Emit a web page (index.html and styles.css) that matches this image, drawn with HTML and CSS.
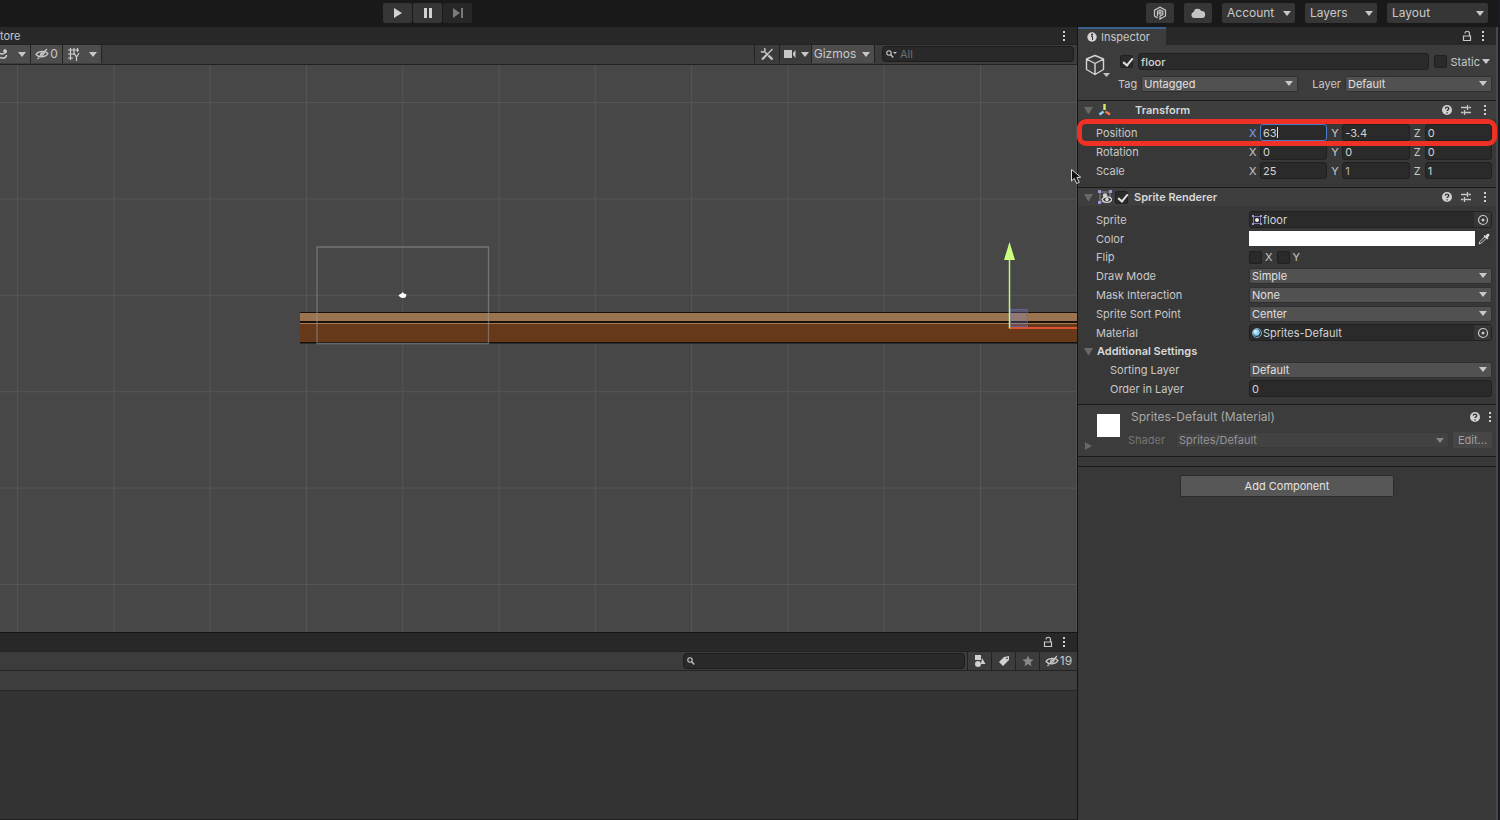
FILE: index.html
```html
<!DOCTYPE html>
<html lang="en">
<head>
<meta charset="utf-8">
<title>Editor</title>
<link rel="stylesheet" href="styles.css">
</head>
<body>
<svg class="sprites" aria-hidden="true">
  <symbol id="help" viewBox="0 0 12 12"><circle cx="6" cy="6" r="5" fill="#d0d0d0"/><path d="M4.300 4.800c0-2.300 3.500-2.200 3.500-.2 0 1.300-1.700 1.200-1.700 2.500M6.100 8.200v1.300" fill="none" stroke="#333" stroke-width="1.300"/></symbol>
  <symbol id="preset" viewBox="0 0 12 12"><path d="M1 3.500h6M8.500 3.500H11M7.500 1v5M1 8.500h2.500M5 8.500h6M4.500 6v5" fill="none" stroke="#c8c8c8" stroke-width="1.300"/></symbol>
  <symbol id="more" viewBox="0 0 4 12"><path d="M1 1h2v2H1zM1 5h2v2H1zM1 9h2v2H1z" fill="#d0d0d0"/></symbol>
  <symbol id="lock" viewBox="0 0 10 12"><path d="M1.500 6h7v4.500h-7zM3 3.500c0-3 4.500-3 4.500 0V6" fill="none" stroke="#c8c8c8" stroke-width="1.200"/></symbol>
  <symbol id="eye" viewBox="0 0 14 12"><path d="M1 6.500C3 3 10 2 13 5.500 11 9.500 4 10 1 6.500zM2.500 11 12 1" fill="none" stroke="#c8c8c8" stroke-width="1.200"/><path d="M5 7.500c-.5-3 2-4 3.500-3.500z" fill="#c8c8c8"/><path d="M6.500 9 10 4.500" stroke="#c8c8c8" stroke-width="1.200"/></symbol>
  <symbol id="glass" viewBox="0 0 12 10"><circle cx="4" cy="4" r="2.200" fill="none" stroke="#c8c8c8" stroke-width="1.100"/><path d="m5.700 5.700 2.600 2.800" stroke="#c8c8c8" stroke-width="1.300"/></symbol>
  <symbol id="target" viewBox="0 0 12 12"><circle cx="6" cy="6" r="4.500" fill="none" stroke="#c8c8c8" stroke-width="1.200"/><circle cx="6" cy="6" r="1.500" fill="#c8c8c8"/></symbol>
</svg>

<header class="topbar">
  <div class="transport">
    <button class="tool" aria-label="Play"><svg width="14" height="12" viewBox="0 0 14 12"><path d="M3 1v10l8-5z" fill="#d2d2d2"/></svg></button>
    <button class="tool" aria-label="Pause"><svg width="14" height="12" viewBox="0 0 14 12"><path d="M3 1h3v10H3zM8 1h3v10H8z" fill="#d2d2d2"/></svg></button>
    <button class="tool dim" aria-label="Step"><svg width="14" height="12" viewBox="0 0 14 12"><path d="M2 1v10l7-5zM10 1h2v10h-2z" fill="#7a7a7a"/></svg></button>
  </div>
  <div class="account">
    <button class="tool" aria-label="Collaborate"><svg width="14" height="14" viewBox="0 0 14 14" fill="none" stroke="#c8c8c8" stroke-width="1.200"><path d="M4.500 12 1.500 10V4.200L7 1.200l5.500 3V10L7 13v-3"/><path d="M4.500 10.500V5.300L7 4l2.800 1.400v3.200L7 10"/><circle cx="7" cy="7" r="1.100"/></svg></button>
    <button class="tool" aria-label="Cloud"><svg width="16" height="12" viewBox="0 0 16 12"><path d="M4 11a3 3 0 0 1-.3-5.900A4 4 0 0 1 11.300 4 3.500 3.500 0 0 1 12 11z" fill="#c4c4c4"/></svg></button>
    <button class="tool menu acct">Account</button>
    <span class="menu"><select class="top-select layers" aria-label="Layers"><option>Layers</option></select></span>
    <span class="menu"><select class="top-select layout" aria-label="Layout"><option>Layout</option></select></span>
  </div>
</header>

<div class="workspace">
  <main class="left">
    <section class="scene">
      <div class="tabs"><span class="cut-tab">tore</span><button class="icon push" aria-label="Scene menu"><svg width="4" height="12"><use href="#more"/></svg></button></div>
      <div class="bar scene-bar">
        <button class="tb lit fx" aria-label="Effects"><svg width="8" height="12" viewBox="0 0 8 12"><path d="M0 5.500c2 1 4 .5 6.500-1.500M0 9.500c4 1.500 6.500 0 6.500-2.500M3 3h4M5 1v4" fill="none" stroke="#d0d0d0" stroke-width="1.500"/></svg></button>
        <button class="tb lit drop" aria-label="Effects options"></button>
        <button class="tb lit hidden-count"><svg width="14" height="12"><use href="#eye"/></svg>0</button>
        <button class="tb lit grid-btn" aria-label="Grid"><svg width="14" height="14" viewBox="0 0 14 14"><path d="M1 3h11M1 7h6M1 11h5M3.500 1v12M7 1v7M10.500 1v4M7 6l2.500 4L12 6M9.500 10v4" fill="none" stroke="#d0d0d0" stroke-width="1.200"/></svg></button>
        <button class="tb lit drop" aria-label="Grid options"></button>
        <button class="tb push tools" aria-label="Tools"><svg width="14" height="14" viewBox="0 0 14 14" fill="none" stroke="#c8c8c8"><path d="m2 12.500 6-6" stroke-width="2.200"/><path d="m8 6.500 4.500-4.500" stroke-width="1.300"/><path d="m5 5 3 3" stroke-width="1.600"/><path d="m8.500 8.500 4 4" stroke-width="2.400"/><path d="M1 4.500c3 1.500 5-.5 3.500-3.500" stroke-width="1.500"/></svg></button>
        <button class="tb camera" aria-label="Camera"><svg width="14" height="10" viewBox="0 0 14 10"><path d="M1 1h8v8H1zM10 4l2.500-3v8L10 6z" fill="#c8c8c8"/></svg><i class="tri"></i></button>
        <button class="tb lit gizmos">Gizmos</button>
        <button class="tb lit drop" aria-label="Gizmos options"></button>
        <label class="search all"><svg width="12" height="10"><use href="#glass"/><path d="M8 3h4l-2 2z" fill="#c8c8c8"/></svg><input type="text" placeholder="All" aria-label="Search scene"></label>
      </div>
      <svg class="view" role="img" aria-label="Scene view">
        <defs>
          <pattern id="grid" x="17" y="37" width="96.300" height="96.400" patternUnits="userSpaceOnUse"><path d="M.5 0v97M0 .5h97" stroke="#555" stroke-width="1"/></pattern>
        </defs>
        <rect width="100%" height="100%" fill="url(#grid)"/>
        <svg x="300" y="247" width="100%" height="32">
          <rect width="100%" height="32" fill="#66391a"/>
          <rect width="100%" height="9" fill="#9a7350"/>
          <rect width="100%" height="1" fill="#17100b"/>
          <rect y="9" width="100%" height="2" fill="#17100b"/>
          <rect y="11" width="100%" height="1" fill="#a87c54"/>
          <rect y="30" width="100%" height="1" fill="#17100b"/>
          <rect y="31" width="100%" height="1" fill="#2c2c2c"/>
        </svg>
        <path d="M317 278.500V182h171.500v96.500z" fill="none" stroke="#a0a0a0" stroke-opacity=".5" stroke-width="1.300"/>
        <path d="M398.500 230.500c1.500-2 3-1 4-3.500l1.500 1.500 2.500 1-1 3c-3 1-5 .5-7-2z" fill="#fff"/>
        <rect x="1010.500" y="244.500" width="17" height="17" fill="#8485d0" fill-opacity=".28" stroke="#6366ac" stroke-opacity=".7"/>
        <path d="M1010 263h67" stroke="#dc5332" stroke-width="2"/>
        <path d="M1009.500 263.500V194" stroke="#c6f779" stroke-width="1.500"/>
        <path d="m1009.500 177-5.500 18h11z" fill="#ccff80"/>
      </svg>
    </section>
    <section class="project">
      <div class="tabs"><button class="icon push" aria-label="Lock project"><svg width="10" height="12"><use href="#lock"/></svg></button><button class="icon" aria-label="Project menu"><svg width="4" height="12"><use href="#more"/></svg></button></div>
      <div class="bar">
        <label class="search assets push"><svg width="12" height="10"><use href="#glass"/></svg><input type="text" aria-label="Search assets"></label>
        <button class="tb filter" aria-label="Filter by type"><svg width="14" height="14" viewBox="0 0 14 14"><path d="M2 1h6v5H2zM9 4l3.500 6H8z" fill="#d0d0d0"/><circle cx="5" cy="10" r="3" fill="#d0d0d0"/></svg></button>
        <button class="tb filter" aria-label="Filter by label"><svg width="12" height="12" viewBox="0 0 12 12"><path d="m1 7 5-5 5-1v4l-6 6z" fill="#d0d0d0"/><circle cx="9" cy="3.300" r=".9" fill="#444"/></svg></button>
        <button class="tb filter" aria-label="Favourites"><svg width="12" height="12" viewBox="0 0 12 12"><path d="m6 .5 1.600 3.700 4 .3-3 2.700.9 4L6 9.100l-3.500 2.100.9-4-3-2.700 4-.3z" fill="#888"/></svg></button>
        <button class="tb hidden-assets"><svg width="14" height="12"><use href="#eye"/></svg>19</button>
      </div>
      <div class="crumbs"></div>
    </section>
  </main>

  <aside class="inspector">
    <div class="tabs">
      <span class="tab"><svg width="10" height="10" viewBox="0 0 10 10"><circle cx="5" cy="5" r="4.700" fill="#d4d4d4"/><path d="M4 4.500h1.500V8M4.500 2h1.200v1.200H4.500z" fill="none" stroke="#333"/></svg>Inspector</span>
      <button class="icon push" aria-label="Lock inspector"><svg width="10" height="12"><use href="#lock"/></svg></button><button class="icon" aria-label="Inspector menu"><svg width="4" height="12"><use href="#more"/></svg></button>
    </div>

    <section class="object">
      <svg class="cube" width="28" height="26" viewBox="0 0 28 26"><path d="M10 1.500 18.500 5v10.500L10 20.500 1.500 15.500V5zM1.500 5 10 9.500 18.500 5M10 9.500v11" fill="none" stroke="#d4d4d4" stroke-width="1.400" stroke-linejoin="round"/><path d="M18 19h7l-3.500 4z" fill="#c4c4c4"/></svg>
      <div class="object-lines">
        <div class="line name-line">
          <input type="checkbox" class="check" aria-label="Active" checked>
          <input type="text" class="field name" aria-label="Name" value="floor">
          <label class="static"><input type="checkbox" class="check">Static</label><i class="tri"></i>
        </div>
        <div class="line tag-line">
          <label for="tag">Tag</label><span class="drop-down"><select id="tag"><option>Untagged</option></select></span>
          <label for="layer" class="layer-label">Layer</label><span class="drop-down"><select id="layer"><option>Default</option></select></span>
        </div>
      </div>
    </section>

    <section class="component transform">
      <h2 class="head">
        <i class="fold"></i>
        <svg width="14" height="14" viewBox="0 0 14 14" fill="none" stroke-width="2.400"><path d="M6.500 1v6" stroke="#d7ee62"/><path d="m5.500 8.500-4 3" stroke="#8fd4f4"/><path d="m7.500 8.500 4.500 3" stroke="#f47b46"/></svg>
        <span class="title no-check">Transform</span>
        <button class="icon" aria-label="Help"><svg width="12" height="12"><use href="#help"/></svg></button><button class="icon" aria-label="Presets"><svg width="12" height="12"><use href="#preset"/></svg></button><button class="icon" aria-label="Transform menu"><svg width="4" height="12"><use href="#more"/></svg></button>
      </h2>
      <div class="row marked"><span class="label">Position</span>
        <div class="axes"><label class="axis active">X<span class="caret-box"><input class="field" value="63"></span></label><label class="axis">Y<input class="field" value="-3.4"></label><label class="axis">Z<input class="field" value="0"></label></div></div>
      <div class="row"><span class="label">Rotation</span>
        <div class="axes"><label class="axis">X<input class="field" value="0"></label><label class="axis">Y<input class="field" value="0"></label><label class="axis">Z<input class="field" value="0"></label></div></div>
      <div class="row"><span class="label">Scale</span>
        <div class="axes"><label class="axis">X<input class="field" value="25"></label><label class="axis">Y<input class="field soft" value="1"></label><label class="axis">Z<input class="field" value="1"></label></div></div>
    </section>

    <section class="component renderer">
      <h2 class="head">
        <i class="fold"></i>
        <svg width="14" height="14" viewBox="0 0 14 14"><path d="M2 2h10v10H2z" fill="none" stroke="#88829f"/><path d="M0 0h3v3H0zM11 0h3v3h-3zM0 11h3v3H0z" fill="#a394d8"/><circle cx="7" cy="5.500" r="2.200" fill="#ccc"/><path d="M4 9.500c2-3.500 8-3.500 10 0-2 4-8 4-10 0z" fill="#383838" stroke="#ddd" stroke-width="1.200"/><circle cx="9" cy="9.500" r="1.700" fill="#ddd"/></svg>
        <input type="checkbox" class="check" aria-label="Enable Sprite Renderer" checked>
        <span class="title">Sprite Renderer</span>
        <button class="icon" aria-label="Help"><svg width="12" height="12"><use href="#help"/></svg></button><button class="icon" aria-label="Presets"><svg width="12" height="12"><use href="#preset"/></svg></button><button class="icon" aria-label="Sprite Renderer menu"><svg width="4" height="12"><use href="#more"/></svg></button>
      </h2>
      <div class="row"><span class="label">Sprite</span>
        <div class="field object-field"><svg width="10" height="10" viewBox="0 0 10 10"><path d="M1.500 1.500h7v7h-7z" fill="#222" stroke="#8478b0"/><path d="M0 0h2v2H0zM8 0h2v2H8zM0 8h2v2H0zM8 8h2v2H8z" fill="#a394d8"/><circle cx="5" cy="5" r="2" fill="#eee"/></svg>floor<button class="pick" aria-label="Select sprite"><svg width="12" height="12"><use href="#target"/></svg></button></div></div>
      <div class="row"><span class="label">Color</span>
        <div class="color"><button class="swatch" aria-label="Color"></button><button class="pick" aria-label="Pick color"><svg width="12" height="12" viewBox="0 0 12 12"><path d="M1 11l1-2.500L6.500 4l1.500 1.500L3.500 10z" fill="none" stroke="#ccc"/><path d="m5.500 3 1-1 1 1C9 .5 10 .500 11 1s.5 2-1.500 3.500l1 1-1 1z" fill="#ddd"/></svg></button></div></div>
      <div class="row short"><span class="label">Flip</span>
        <div class="flip"><label><input type="checkbox" class="check">X</label><label><input type="checkbox" class="check">Y</label></div></div>
      <div class="row"><label class="label" for="draw">Draw Mode</label><span class="drop-down"><select id="draw"><option>Simple</option></select></span></div>
      <div class="row"><label class="label" for="mask">Mask Interaction</label><span class="drop-down"><select id="mask"><option>None</option></select></span></div>
      <div class="row"><label class="label" for="sort">Sprite Sort Point</label><span class="drop-down"><select id="sort"><option>Center</option></select></span></div>
      <div class="row"><span class="label">Material</span>
        <div class="field object-field"><svg width="10" height="10" viewBox="0 0 10 10"><circle cx="5" cy="5" r="4.500" fill="#1d3b4c" stroke="#8ab"/><circle cx="4.300" cy="4.300" r="3.400" fill="#8fd0ee"/><circle cx="3.500" cy="3.500" r="1.500" fill="#d8f2ff"/></svg>Sprites-Default<button class="pick" aria-label="Select material"><svg width="12" height="12"><use href="#target"/></svg></button></div></div>
      <h3 class="sub"><i class="fold"></i>Additional Settings</h3>
      <div class="row nested"><label class="label" for="sorting">Sorting Layer</label><span class="drop-down"><select id="sorting"><option>Default</option></select></span></div>
      <div class="row nested"><label class="label" for="order">Order in Layer</label><input class="field" id="order" value="0"></div>
    </section>

    <section class="material">
      <div class="preview"><span class="thumb"></span><i class="fold closed"></i></div>
      <div class="material-lines">
        <div class="material-title"><span>Sprites-Default (Material)</span><button class="icon push" aria-label="Help"><svg width="12" height="12"><use href="#help"/></svg></button><button class="icon" aria-label="Material menu"><svg width="4" height="12"><use href="#more"/></svg></button></div>
        <div class="shader"><label for="shader">Shader</label><span class="drop-down"><select id="shader" disabled><option>Sprites/Default</option></select></span><button class="edit" disabled>Edit...</button></div>
      </div>
    </section>
    <div class="divider"></div>
    <button class="add">Add Component</button>
    <svg class="cursor" width="14" height="18" viewBox="0 0 14 18"><path d="M1.500 1.500V13l2.800-2.600 2.400 5.100 2.600-1.200-2.400-4.800 3.800-.3z" fill="#111" stroke="#ddd"/></svg>
  </aside>
</div>
</body>
</html>
```

FILE: styles.css
```css
* { box-sizing: border-box; }
body { margin: 0; min-height: 100vh; display: flex; flex-direction: column; background: #191919; border-right: 2px solid #1b1b23; color: #c8c8c8; font: 11px/16px Inter, "Liberation Sans", sans-serif; }
button, input, select { font: inherit; color: inherit; margin: 0; padding: 0; border: 0; border-radius: 0; background: none; min-width: 0; }
select { appearance: none; width: 100%; height: 100%; outline: 0; }
input { outline: 0; }
svg { display: block; flex: none; }
h2, h3 { margin: 0; font-size: 11px; font-weight: 600; }
.sprites { position: absolute; width: 0; height: 0; }
.push { margin-left: auto; }

.tri, .drop::after, .menu::after, .drop-down::after { content: ""; flex: none; border: 4px solid transparent; border-top: 5px solid #c8c8c8; border-bottom: 0; pointer-events: none; }

.topbar { display: flex; justify-content: space-between; align-items: flex-start; height: 27px; padding: 3px 10px 0 383px; font-size: 12px; }
.transport { display: flex; gap: 1px; }
.account { display: flex; gap: 10px; }
.tool { display: flex; align-items: center; justify-content: center; width: 29px; height: 20px; background: #363636; border-radius: 2px; }
.account .tool { width: 28px; }
.tool.dim { background: #272727; }
.menu { position: relative; display: flex; align-items: center; height: 20px; background: #363636; border-radius: 2px; }
.menu::after { position: absolute; right: 4px; }
.account .acct { width: 73px; padding-left: 5px; justify-content: flex-start; }
.top-select { padding-left: 5px; }
.layers { width: 72px; }
.layout { width: 101px; }

.workspace { flex: 1; display: flex; }
.left { flex: 1; min-width: 0; display: flex; flex-direction: column; border-right: 1px solid #151515; }
.scene { flex: 1; display: flex; flex-direction: column; background: #474747; }
.tabs { display: flex; align-items: center; height: 18px; padding-right: 11px; background: #282828; gap: 9px; }
.scene .tabs { height: 17px; }
.icon { display: flex; align-items: center; justify-content: center; }
.bar { display: flex; align-items: center; height: 20px; background: #3c3c3c; border-top: 1px solid #232323; border-bottom: 1px solid #232323; font-size: 12px; }
.scene-bar { height: 21px; padding-bottom: 1px; }
.tb { display: flex; align-items: center; justify-content: center; height: 18px; border-left: 1px solid #232323; }
.lit { background: #4d4d4d; }
.fx { width: 14px; border: 0; justify-content: flex-start; }
.drop { width: 17px; border-left: 0; border-right: 1px solid #232323; }
.hidden-count { width: 31px; border: 0; gap: 1px; }
.grid-btn { width: 23px; }
.tools { width: 25px; }
.camera { width: 32px; gap: 4px; }
.gizmos { width: 47px; }
.search { display: flex; align-items: center; gap: 4px; height: 16px; background: #292929; border: 1px solid #1c1c1c; border-radius: 4px; padding-left: 2px; }
.search input { flex: 1; width: 100%; }
.search input::placeholder { color: #6f6f6f; opacity: 1; font-size: 11px; }
.all { width: 192px; margin: 0 3px 0 7px; }
.all svg { margin-right: -1px; }
.view { flex: 1; width: 100%; min-height: 0; }

.project { height: 188px; background: #333; border-top: 1px solid #151515; border-bottom: 1px solid #1c1c1c; }
.assets { width: 282px; margin-right: 2px; }
.filter { width: 24px; }
.hidden-assets { width: 38px; gap: 1px; }
.crumbs { height: 20px; background: #3e3e3e; border-bottom: 1px solid #262626; }

.inspector { position: relative; width: 420px; background: #383838; border-right: 2px solid #484848; }
.tab { display: flex; align-items: center; gap: 4px; height: 18px; width: 88px; padding: 0 0 1px 9px; background: #3c3c3c; border-top: 2px solid #3b5f8c; }
.object { display: flex; gap: 7px; height: 55px; padding: 8px 4px 0 7px; background: #3c3c3c; }
.cube { margin-top: 1px; }
.object-lines { flex: 1; min-width: 0; }
.line { display: flex; align-items: center; height: 17px; }
.name-line { padding-right: 2px; gap: 5px; }
.tag-line { margin-top: 5px; gap: 4px; margin-left: -2px; }
.layer-label { margin-left: 10px; }
.static { display: flex; align-items: center; gap: 4px; }
.name-line .tri { margin-left: -3px; }
.name { flex: 1; font-weight: 500; }
.tag-line .drop-down:last-child { flex: 0 0 147px; }

.check { appearance: none; flex: none; position: relative; width: 13px; height: 13px; background: #2a2a2a; border: 1px solid #202020; border-radius: 2px; }
.check:checked::after { content: ""; position: absolute; left: 4px; top: 0; width: 4px; height: 8px; border: solid #e0e0e0; border-width: 0 2px 2px 0; transform: rotate(40deg); }
.field { width: 100%; height: 17px; padding: 0 2px; background: #2a2a2a; border: 1px solid #202020; border-radius: 3px; color: #d4d4d4; }
.drop-down { position: relative; flex: 1; min-width: 0; display: flex; align-items: center; height: 16px; background: #515151; border: 1px solid #303030; border-radius: 2px; color: #e0e0e0; }
.drop-down select { padding-left: 2px; line-height: 14px; }
.drop-down::after { position: absolute; right: 4px; }

.component { border-top: 1px solid #1a1a1a; }
.transform { height: 87px; }
.renderer { height: 217px; }
.head { display: flex; align-items: center; gap: 7px; height: 18px; margin-bottom: 4px; padding: 0 9px 0 6px; background: #3e3e3e; }
.head svg { margin-left: -2px; }
.head .icon svg { margin: 0; }
.head .check { margin-left: -4px; }
.head .title { flex: 1; color: #d8d8d8; }
.head .title.no-check { padding-left: 16px; }
.renderer .title { margin-left: -1px; }
.head .icon:last-child { margin-left: 4px; }
.fold { flex: none; width: 9px; border: 4px solid transparent; border-top: 7px solid #686868; border-bottom: 0; }
.fold.closed { width: 8px; border: 4px solid transparent; border-left: 7px solid #686868; border-right: 0; }
.row { position: relative; display: flex; align-items: center; height: 19px; padding: 0 4px 0 18px; }
.row.short { height: 18px; }
.label { flex: 0 0 153px; }
.row > .field, .color { flex: 1; width: auto; }
.nested { padding-left: 32px; }
.nested .label { flex-basis: 139px; }
.marked::after { content: ""; position: absolute; inset: -4px -1px -4px -1px; border: 5px solid #ee3124; border-radius: 9px; pointer-events: none; z-index: 1; }
.axes { flex: 1; display: grid; grid-template-columns: repeat(3, 1fr); gap: 4px; }
.axis { display: grid; grid-template-columns: 11px 1fr; align-items: center; }
.axis.active { color: #7ba5ee; }
.caret-box { position: relative; display: flex; }
.caret-box .field { border-color: #4a7cc7; }
.caret-box::after { content: ""; position: absolute; left: 17px; top: 3px; width: 1px; height: 11px; background: #ddd; }
.soft { color: #b4b4b4; }
.object-field { display: flex; align-items: center; gap: 1px; padding: 0 0 0 2px; }
.pick { display: flex; align-items: center; justify-content: center; width: 17px; height: 15px; margin-left: auto; background: #363636; }
.color { display: flex; align-items: center; }
.swatch { flex: 1; height: 15px; background: #fff; }
.flip { display: flex; gap: 4px; }
.flip label { display: flex; align-items: center; gap: 3px; }
.sub { display: flex; align-items: center; gap: 4px; height: 18px; padding-left: 6px; color: #d8d8d8; }

.material { display: flex; height: 53px; padding: 4px 4px 0 7px; gap: 7px; background: #3c3c3c; border-top: 1px solid #1a1a1a; border-bottom: 1px solid #1a1a1a; }
.preview { width: 36px; }
.thumb { display: block; width: 23px; height: 23px; margin: 5px 0 5px 12px; background: #fff; }
.preview .fold { display: block; }
.material-lines { flex: 1; min-width: 0; }
.material-title { display: flex; align-items: center; gap: 7px; padding-left: 3px; font-size: 12px; color: #a8a8a8; }
.shader { display: flex; align-items: center; gap: 4px; margin-top: 7px; color: #757575; }
.shader .drop-down { margin-left: 7px; background: #424242; border-color: #3a3a3a; color: #949494; }
.shader .drop-down::after { border-top-color: #858585; }
.shader select { opacity: 1; }
.edit { width: 39px; height: 16px; background: #464646; color: #a0a0a0; }
.divider { height: 10px; border-bottom: 1px solid #1a1a1a; }
.add { display: block; width: 214px; height: 22px; margin: 8px auto 0; background: #575757; border: 1px solid #2c2c2c; border-radius: 2px; color: #e4e4e4; }
.cursor { position: absolute; left: -8px; top: 141px; }
```
